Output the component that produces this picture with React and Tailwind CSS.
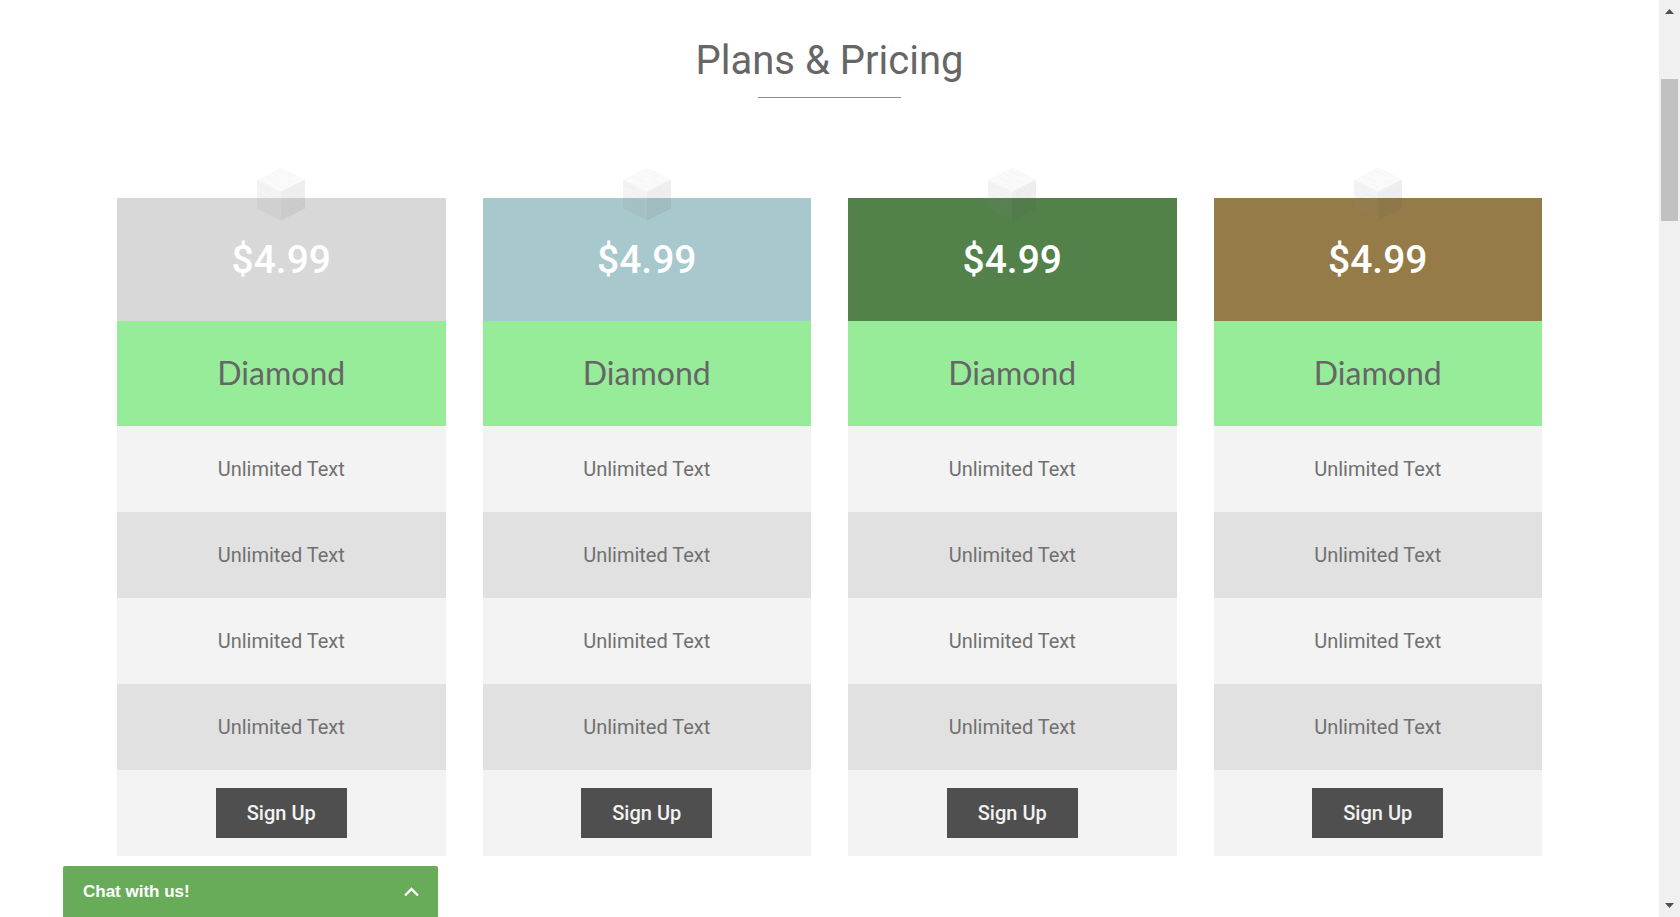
const features = ["Unlimited Text", "Unlimited Text", "Unlimited Text", "Unlimited Text"];

const plans = [
    { id: "silver", name: "Diamond", price: "$4.99", color: "bg-[#d8d8d8]" },
    { id: "ice", name: "Diamond", price: "$4.99", color: "bg-[#a7c8cd]" },
    { id: "emerald", name: "Diamond", price: "$4.99", color: "bg-[#53814a]" },
    { id: "gold", name: "Diamond", price: "$4.99", color: "bg-[#957b48]" },
];

function Cube(){
    return(
        <svg className="absolute -top-8 left-1/2 -translate-x-1/2" width="50" height="56" viewBox="-1 -1 50 56" aria-hidden="true">
            <path d="M24 0 48 12.5 24 24.5 0 12.5Z" fill="#d7d7d7" fillOpacity=".12"/>
            <path d="M0 12.5 24 24.5V53.5L0 41.5Z" fill="#8c8c8c" fillOpacity=".1"/>
            <path d="M48 12.5 24 24.5V53.5L48 41.5Z" fill="#5a5a5a" fillOpacity=".1"/>
            {/* wool grain */}
            <g fill="none" stroke="#777" strokeOpacity=".04">
                <path d="M15 6 21 9M9 9 17 13 22 15M22 4 30 8 34 9M29 13 36 16M17 17 25 20M31 5 39 9"/>
                <path d="M1 18 8 20 13 23M10 26 22 31M2 27 9 31M4 35 13 38 17 41M13 34 22 38M15 44 22 48"/>
                <path d="M27 27 35 24 38 21M38 27 46 22M27 36 34 32M36 36 46 31M27 45 36 42M38 42 45 38"/>
            </g>
        </svg>
    )
}

function PlanCard({ plan }){
    return(
        <article className="bg-[#f3f3f3] text-center">
            <div className={`relative pt-[38px] pb-[37px] text-[39px] leading-12 font-medium text-white ${plan.color}`}>
                <Cube/>
                <p>{plan.price}</p>
            </div>
            <h2 className="bg-[#97ec9a] pt-8 pb-[33px] font-['Lato',sans-serif] text-[32px] leading-10 text-[#666]">{plan.name}</h2>
            <ul className="text-xl text-[#707070]">
                {features.map((feature, i) => (
                    <li key={i} className="py-[29px] even:bg-[#e1e1e1]">{feature}</li>
                ))}
            </ul>
            <div className="py-[18px]">
                <button type="button" className="bg-[#4f4f4f] px-[31px] py-[11px] text-xl font-medium text-[#f2f2f2]">Sign Up</button>
            </div>
        </article>
    )
}

function ScrollBar(){
    return(
        <div className="flex w-[21px] shrink-0 flex-col items-center bg-[#f0f0f0] text-[#505050]" aria-hidden="true">
            <svg className="mt-2" width="9" height="6" viewBox="0 0 9 6"><path d="M0 6 4.5 1 9 6Z" fill="currentColor"/></svg>
            <div className="mt-[65px] h-[142px] w-[17px] bg-[#c1c1c1]"/>
            <svg className="mt-auto mb-2" width="9" height="6" viewBox="0 0 9 6"><path d="M0 0H9L4.5 5Z" fill="currentColor"/></svg>
        </div>
    )
}

export default function App(){
    return(
        <div className="flex h-screen overflow-hidden bg-white font-['Roboto',sans-serif]">
            <main className="min-w-0 flex-1">
                <h1 className="pt-[37px] text-center text-[40px] leading-12 text-[#666]">Plans &amp; Pricing</h1>
                <div className="mx-auto mt-3 h-px w-[143px] bg-[#8c8c8c]"/>
                <section className="grid grid-cols-4 gap-[37px] px-[117px] pt-[100px]">
                    {plans.map((plan) => <PlanCard key={plan.id} plan={plan}/>)}
                </section>
            </main>
            <ScrollBar/>
            <button type="button" className="fixed bottom-0 left-[63px] flex h-[51px] w-[375px] items-center justify-between rounded-t-xs bg-[#68ac5a] pr-[19px] pl-5 font-['Liberation_Sans',sans-serif] text-[17px] font-bold text-white">
                Chat with us!
                <svg width="15" height="10" viewBox="0 0 15 10" fill="none" stroke="currentColor" strokeWidth="2.4" aria-hidden="true"><path d="M1 8.5 7.5 2 14 8.5"/></svg>
            </button>
        </div>
    )
}
